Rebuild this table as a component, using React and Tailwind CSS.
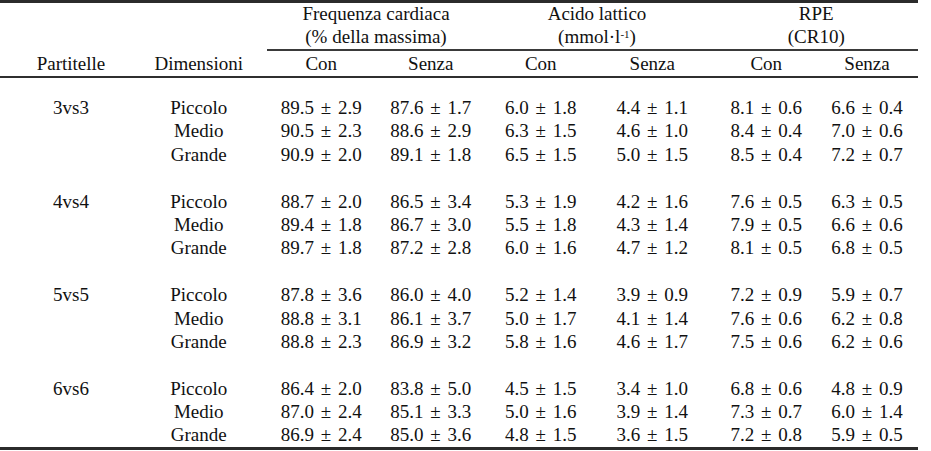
const cols =
  'grid grid-cols-[135px_125.5px_115.5px_109.5px_110.5px_112.5px_107.5px_102px]'

const groups = [
  {
    name: '3vs3',
    rows: [
      ['Piccolo', '89.5 ± 2.9', '87.6 ± 1.7', '6.0 ± 1.8', '4.4 ± 1.1', '8.1 ± 0.6', '6.6 ± 0.4'],
      ['Medio', '90.5 ± 2.3', '88.6 ± 2.9', '6.3 ± 1.5', '4.6 ± 1.0', '8.4 ± 0.4', '7.0 ± 0.6'],
      ['Grande', '90.9 ± 2.0', '89.1 ± 1.8', '6.5 ± 1.5', '5.0 ± 1.5', '8.5 ± 0.4', '7.2 ± 0.7'],
    ],
  },
  {
    name: '4vs4',
    rows: [
      ['Piccolo', '88.7 ± 2.0', '86.5 ± 3.4', '5.3 ± 1.9', '4.2 ± 1.6', '7.6 ± 0.5', '6.3 ± 0.5'],
      ['Medio', '89.4 ± 1.8', '86.7 ± 3.0', '5.5 ± 1.8', '4.3 ± 1.4', '7.9 ± 0.5', '6.6 ± 0.6'],
      ['Grande', '89.7 ± 1.8', '87.2 ± 2.8', '6.0 ± 1.6', '4.7 ± 1.2', '8.1 ± 0.5', '6.8 ± 0.5'],
    ],
  },
  {
    name: '5vs5',
    rows: [
      ['Piccolo', '87.8 ± 3.6', '86.0 ± 4.0', '5.2 ± 1.4', '3.9 ± 0.9', '7.2 ± 0.9', '5.9 ± 0.7'],
      ['Medio', '88.8 ± 3.1', '86.1 ± 3.7', '5.0 ± 1.7', '4.1 ± 1.4', '7.6 ± 0.6', '6.2 ± 0.8'],
      ['Grande', '88.8 ± 2.3', '86.9 ± 3.2', '5.8 ± 1.6', '4.6 ± 1.7', '7.5 ± 0.6', '6.2 ± 0.6'],
    ],
  },
  {
    name: '6vs6',
    rows: [
      ['Piccolo', '86.4 ± 2.0', '83.8 ± 5.0', '4.5 ± 1.5', '3.4 ± 1.0', '6.8 ± 0.6', '4.8 ± 0.9'],
      ['Medio', '87.0 ± 2.4', '85.1 ± 3.3', '5.0 ± 1.6', '3.9 ± 1.4', '7.3 ± 0.7', '6.0 ± 1.4'],
      ['Grande', '86.9 ± 2.4', '85.0 ± 3.6', '4.8 ± 1.5', '3.6 ± 1.5', '7.2 ± 0.8', '5.9 ± 0.5'],
    ],
  },
]

function DataRow({ label, cells, h = 'h-[23.4px] leading-[23.4px]' }) {
  return (
    <div className={`${cols} ${h} text-center whitespace-nowrap`}>
      <div className="pl-[7px]">{label}</div>
      <div className="pl-[2px]">{cells[0]}</div>
      <div className="pl-[6px] [word-spacing:2px]">{cells[1]}</div>
      <div className="[word-spacing:2px]">{cells[2]}</div>
      <div className="[word-spacing:2px]">{cells[3]}</div>
      <div className="[word-spacing:2px]">{cells[4]}</div>
      <div className="pl-[8px] [word-spacing:2px]">{cells[5]}</div>
      <div className="[word-spacing:2px]">{cells[6]}</div>
    </div>
  )
}

export default function App() {
  return (
    <div className="w-[931px] h-[451px] bg-white overflow-hidden">
      <div
        className="w-[918px] text-[19px] text-[#111]"
        style={{ fontFamily: '"Liberation Serif", "Times New Roman", serif' }}
      >
        {/* header */}
        <div className="border-t-[3px] border-[#2b2b2b]">
          <div className={`${cols} h-[22px] leading-[22px] text-center whitespace-nowrap`}>
            <div className="col-start-3 col-span-2 pl-[6px]">Frequenza cardiaca</div>
            <div className="col-span-2">Acido lattico</div>
            <div className="col-span-2 pl-[6px]">RPE</div>
          </div>
          <div className={`${cols} h-[24px] leading-[24px] text-center whitespace-nowrap`}>
            <div className="col-start-3 col-span-2 pl-[6px]">(% della massima)</div>
            <div className="col-span-2">
              (mmol·l<sup className="text-[11px]">-1</sup>)
            </div>
            <div className="col-span-2 pl-[6px]">(CR10)</div>
          </div>
          <div className="flex">
            <div className="w-[267px]" />
            <div className="flex-1 h-[2px] bg-[#3a3a3a]" />
          </div>
          <DataRow
            label="Partitelle"
            cells={['Dimensioni', 'Con', 'Senza', 'Con', 'Senza', 'Con', 'Senza']}
            h="h-[25px] leading-[25px]"
          />
          <div className="h-[2px] bg-[#2f2f2f]" />
        </div>

        {/* body */}
        <div className="pt-[18px] border-b-[3px] border-[#2b2b2b]">
          {groups.map((g, gi) => (
            <div key={g.name}>
              {gi > 0 && <div className="h-[23.4px]" />}
              {g.rows.map((r, i) => (
                <DataRow key={r[0]} label={i === 0 ? g.name : ''} cells={r} />
              ))}
            </div>
          ))}
        </div>
      </div>
    </div>
  )
}
